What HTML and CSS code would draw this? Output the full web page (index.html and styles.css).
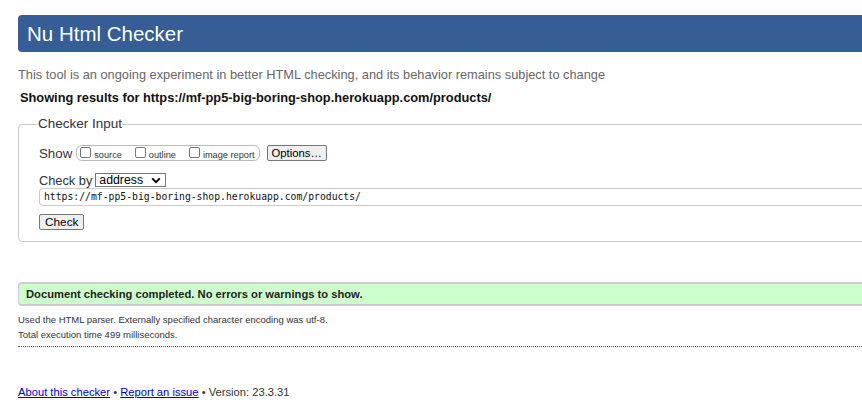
FILE: index.html
```html
<!DOCTYPE html>
<html>
<head>
<meta charset="utf-8">
<link rel="stylesheet" href="styles.css">
</head>
<body>
<div class="page">
  <h1 class="title">Nu Html Checker</h1>
  <p class="intro">This tool is an ongoing experiment in better HTML checking, and its behavior remains subject to change</p>
  <p class="showing">Showing results for https://mf-pp5-big-boring-shop.herokuapp.com/products/</p>
  <fieldset class="checker">
    <legend class="legend">Checker Input</legend>
    <div class="row show-row">
      <span class="label">Show</span>
      <span class="opts">
        <label class="opt"><span class="cb"></span>source</label>
        <label class="opt"><span class="cb"></span>outline</label>
        <label class="opt"><span class="cb"></span>image report</label>
      </span>
      <span class="btn options">Options…</span>
    </div>
    <div class="row by-row">
      <span class="label">Check by</span>
      <span class="select">address<svg class="chev" width="10" height="7" viewBox="0 0 12 8"><path d="M1.5 1.5 L6 6 L10.5 1.5" fill="none" stroke="#000" stroke-width="2.4"/></svg></span>
    </div>
    <div class="url">https://mf-pp5-big-boring-shop.herokuapp.com/products/</div>
    <div class="row check-row"><span class="btn check">Check</span></div>
  </fieldset>
  <div class="success">Document checking completed. No errors or warnings to show.</div>
  <p class="detail">Used the HTML parser. Externally specified character encoding was utf-8.</p>
  <p class="detail">Total execution time 499 milliseconds.</p>
  <div class="footer"><a href="#">About this checker</a> • <a href="#">Report an issue</a> • Version: 23.3.31</div>
</div>
</body>
</html>
```
FILE: styles.css
```css
html, body { margin: 0; padding: 0; overflow: hidden; background: #fff; }
body { font-family: "Liberation Sans", Arial, sans-serif; color: #222; }
.page { width: 1000px; padding: 15px 0 0 18px; }
.title {
  margin: 0; height: 37px; box-sizing: border-box;
  background: #365d95; color: #fff; font-weight: normal;
  font-size: 20.5px; line-height: 37px; padding-left: 9px;
  border-radius: 4px;
}
.intro { margin: 15px 0 0; font-size: 12.8px; color: #666; line-height: 16px; }
.showing { margin: 7px 0 0 2px; font-size: 12.8px; font-weight: bold; color: #111; line-height: 16px; }
.checker {
  margin: 11px 0 0; border: 1px solid #ccc; border-radius: 4px;
  padding: 0 0 11px 20px;
}
.legend { font-size: 13.5px; padding: 0 1px; margin-left: -2px; color: #333; line-height: 14px; }
.row { display: flex; align-items: center; }
.show-row { margin-top: 13px; height: 18px; }
.label { font-size: 13.3px; color: #333; margin-right: 4px; }
.opts {
  display: flex; align-items: center; border: 1px solid #bbb; border-radius: 6px;
  height: 14px; padding: 0 4px 0 3px;
}
.opt { display: flex; align-items: flex-end; font-size: 9.2px; color: #333; margin-right: 13px; height: 13px; }
.opt:last-child { margin-right: 0; }
.cb { width: 9px; height: 9px; border: 1px solid #777; border-radius: 2px; margin-right: 3px; align-self: flex-start; }
.btn {
  display: inline-block; font-size: 11.8px; color: #000; background: #efefef;
  border: 1px solid #767676; border-radius: 2px; padding: 0 5px; line-height: 14px;
}
.options { margin-left: 7px; padding: 0 4px; font-size: 11.3px; }
.by-row { margin-top: 11px; height: 14px; }
.by-row .label { margin-right: 3px; font-size: 12.8px; }
.select {
  display: flex; align-items: center; justify-content: space-between;
  width: 71px; height: 14px; box-sizing: border-box; border: 1px solid #767676;
  font-size: 12.3px; padding: 0 4px 0 3px; color: #000;
}
.chev { width: 10px; height: 7px; }
.url {
  margin-top: 1px; height: 18px; box-sizing: border-box; border: 1px solid #ccc;
  border-radius: 4px; font-family: "DejaVu Sans Mono", monospace; font-size: 9.75px;
  line-height: 16px; padding-left: 4px; color: #111; border-right: none;
}
.check-row { margin-top: 8px; }
.check { padding: 0 5px; line-height: 14px; font-size: 11.8px; }
.success {
  margin-top: 40px; height: 24px; box-sizing: border-box;
  background: #ccffcc; border: 1px solid #ccc; border-width: 2px 0 2px 1px;
  border-radius: 4px 0 0 4px; font-size: 11.2px; font-weight: bold; color: #222;
  line-height: 20px; padding-left: 7px;
}
.detail { margin: 0; font-size: 9.5px; color: #333; line-height: 15px; }
.success + .detail { margin-top: 6px; }
.detail + .detail { border-bottom: 1px dotted #555; padding-bottom: 4px; }
.footer { margin-top: 38px; font-size: 11.2px; color: #333; line-height: 14px; }
.footer a { color: #00c; }
```
